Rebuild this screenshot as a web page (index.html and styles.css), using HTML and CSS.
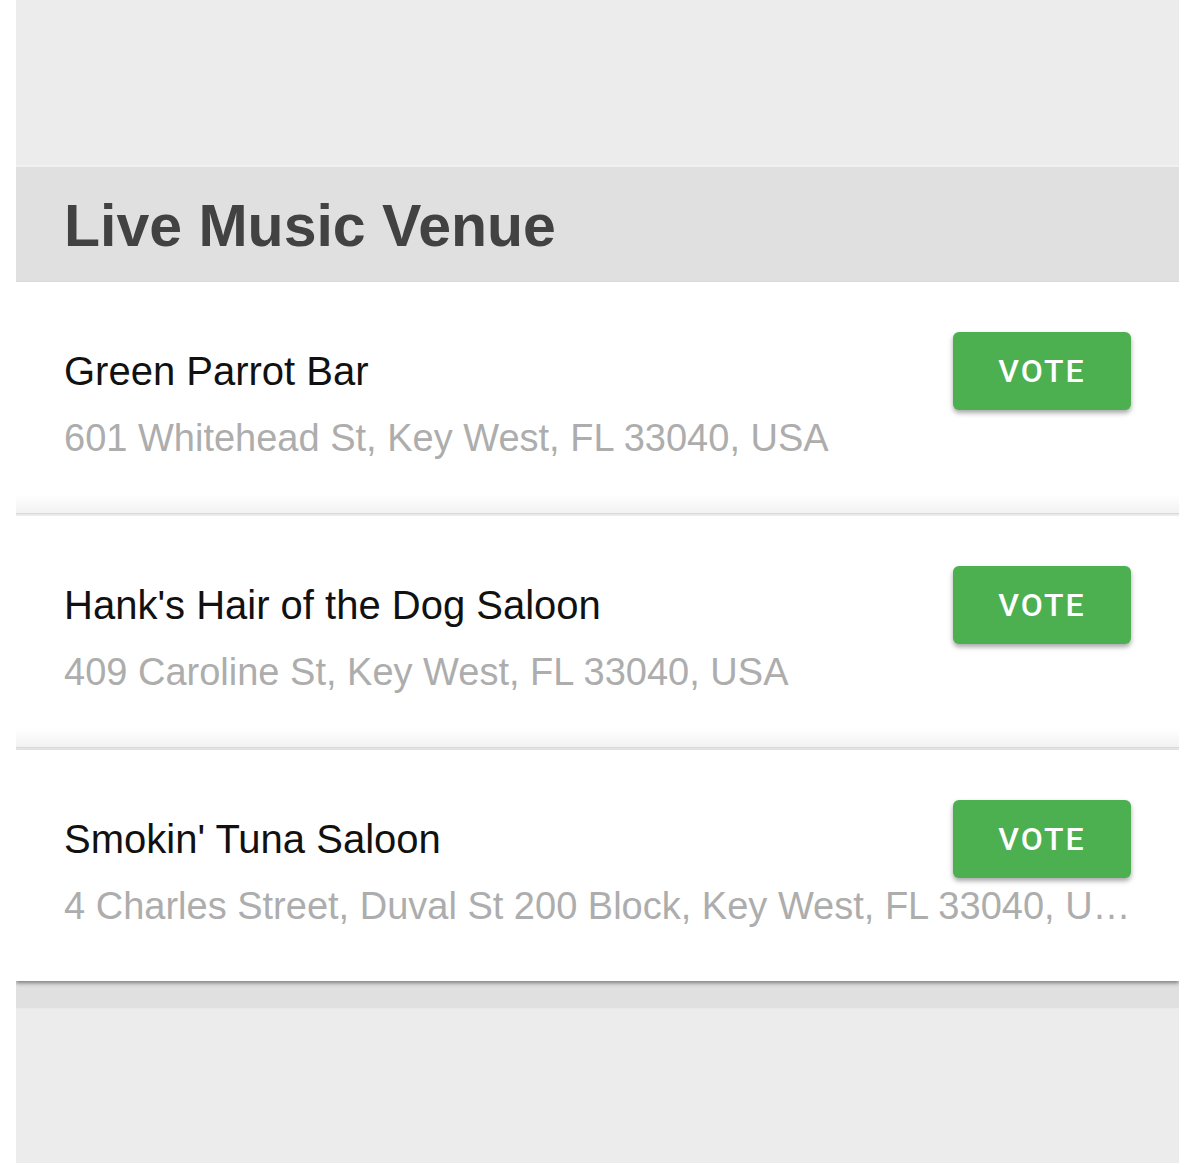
FILE: index.html
```html
<!DOCTYPE html>
<html lang="en">
<head>
<meta charset="utf-8">
<title>Live Music Venue</title>
<link rel="stylesheet" href="styles.css">
</head>
<body>
<div class="page">
  <div class="top-space"></div>
  <section class="category">
    <h2 class="category-title">Live Music Venue</h2>
    <div class="list">
      <div class="card">
        <div class="card-row">
          <div class="name">Green Parrot Bar</div>
          <button class="vote">VOTE</button>
        </div>
        <div class="address">601 Whitehead St, Key West, FL 33040, USA</div>
      </div>
      <div class="card">
        <div class="card-row">
          <div class="name">Hank's Hair of the Dog Saloon</div>
          <button class="vote">VOTE</button>
        </div>
        <div class="address">409 Caroline St, Key West, FL 33040, USA</div>
      </div>
      <div class="card card-last">
        <div class="card-row">
          <div class="name">Smokin' Tuna Saloon</div>
          <button class="vote">VOTE</button>
        </div>
        <div class="address">4 Charles Street, Duval St 200 Block, Key West, FL 33040, USA</div>
      </div>
    </div>
    <div class="category-foot"></div>
  </section>
</div>
</body>
</html>
```
FILE: styles.css
```css
html, body {
  margin: 0;
  padding: 0;
  background: #ffffff;
}

body {
  font-family: "Liberation Sans", Arial, Helvetica, sans-serif;
}

.page {
  margin-left: 16px;
  height: 1163px;
  background: #ececec;
  overflow: hidden;
}

.top-space {
  height: 165px;
}

.category {
  background: #e0e0e0;
  border-top: 2px solid #f1f1f1;
}

.category-title {
  margin: 0;
  padding: 30px 0 26px 48px;
  font-size: 59px;
  line-height: 58px;
  font-weight: 700;
  color: #424242;
}

.list {
  display: flex;
  flex-direction: column;
  gap: 3px;
  background: #ececec;
  border-top: 1px solid #d9d9d9;
}

.card {
  height: 231px;
  box-sizing: border-box;
  padding: 50px 48px 0 48px;
  background: linear-gradient(to bottom, #ffffff 0%, #ffffff 92%, #f2f2f2 100%);
  box-shadow: 0 1px 1px rgba(0, 0, 0, 0.08);
}

.card-last {
  background: #ffffff;
  box-shadow: 0 2px 4px rgba(0, 0, 0, 0.45);
  position: relative;
  z-index: 1;
}

.card-row {
  display: flex;
  align-items: center;
  justify-content: space-between;
  height: 78px;
}

.name {
  font-size: 40px;
  line-height: 48px;
  color: #111111;
  white-space: nowrap;
}

.vote {
  width: 178px;
  height: 78px;
  border: none;
  border-radius: 6px;
  background: #4caf50;
  color: #ffffff;
  font-family: Roboto, "Liberation Sans", Arial, sans-serif;
  font-weight: 500;
  font-size: 32px;
  letter-spacing: 2px;
  padding: 0;
  box-shadow: 0 3px 5px rgba(0, 0, 0, 0.35);
  flex-shrink: 0;
}

.address {
  margin-top: 6px;
  font-size: 38px;
  line-height: 44px;
  color: #adadad;
  white-space: nowrap;
  overflow: hidden;
  text-overflow: ellipsis;
}

.category-foot {
  height: 27px;
  background: #e0e0e0;
  border-bottom: 1px solid #e9e9e9;
}
```
